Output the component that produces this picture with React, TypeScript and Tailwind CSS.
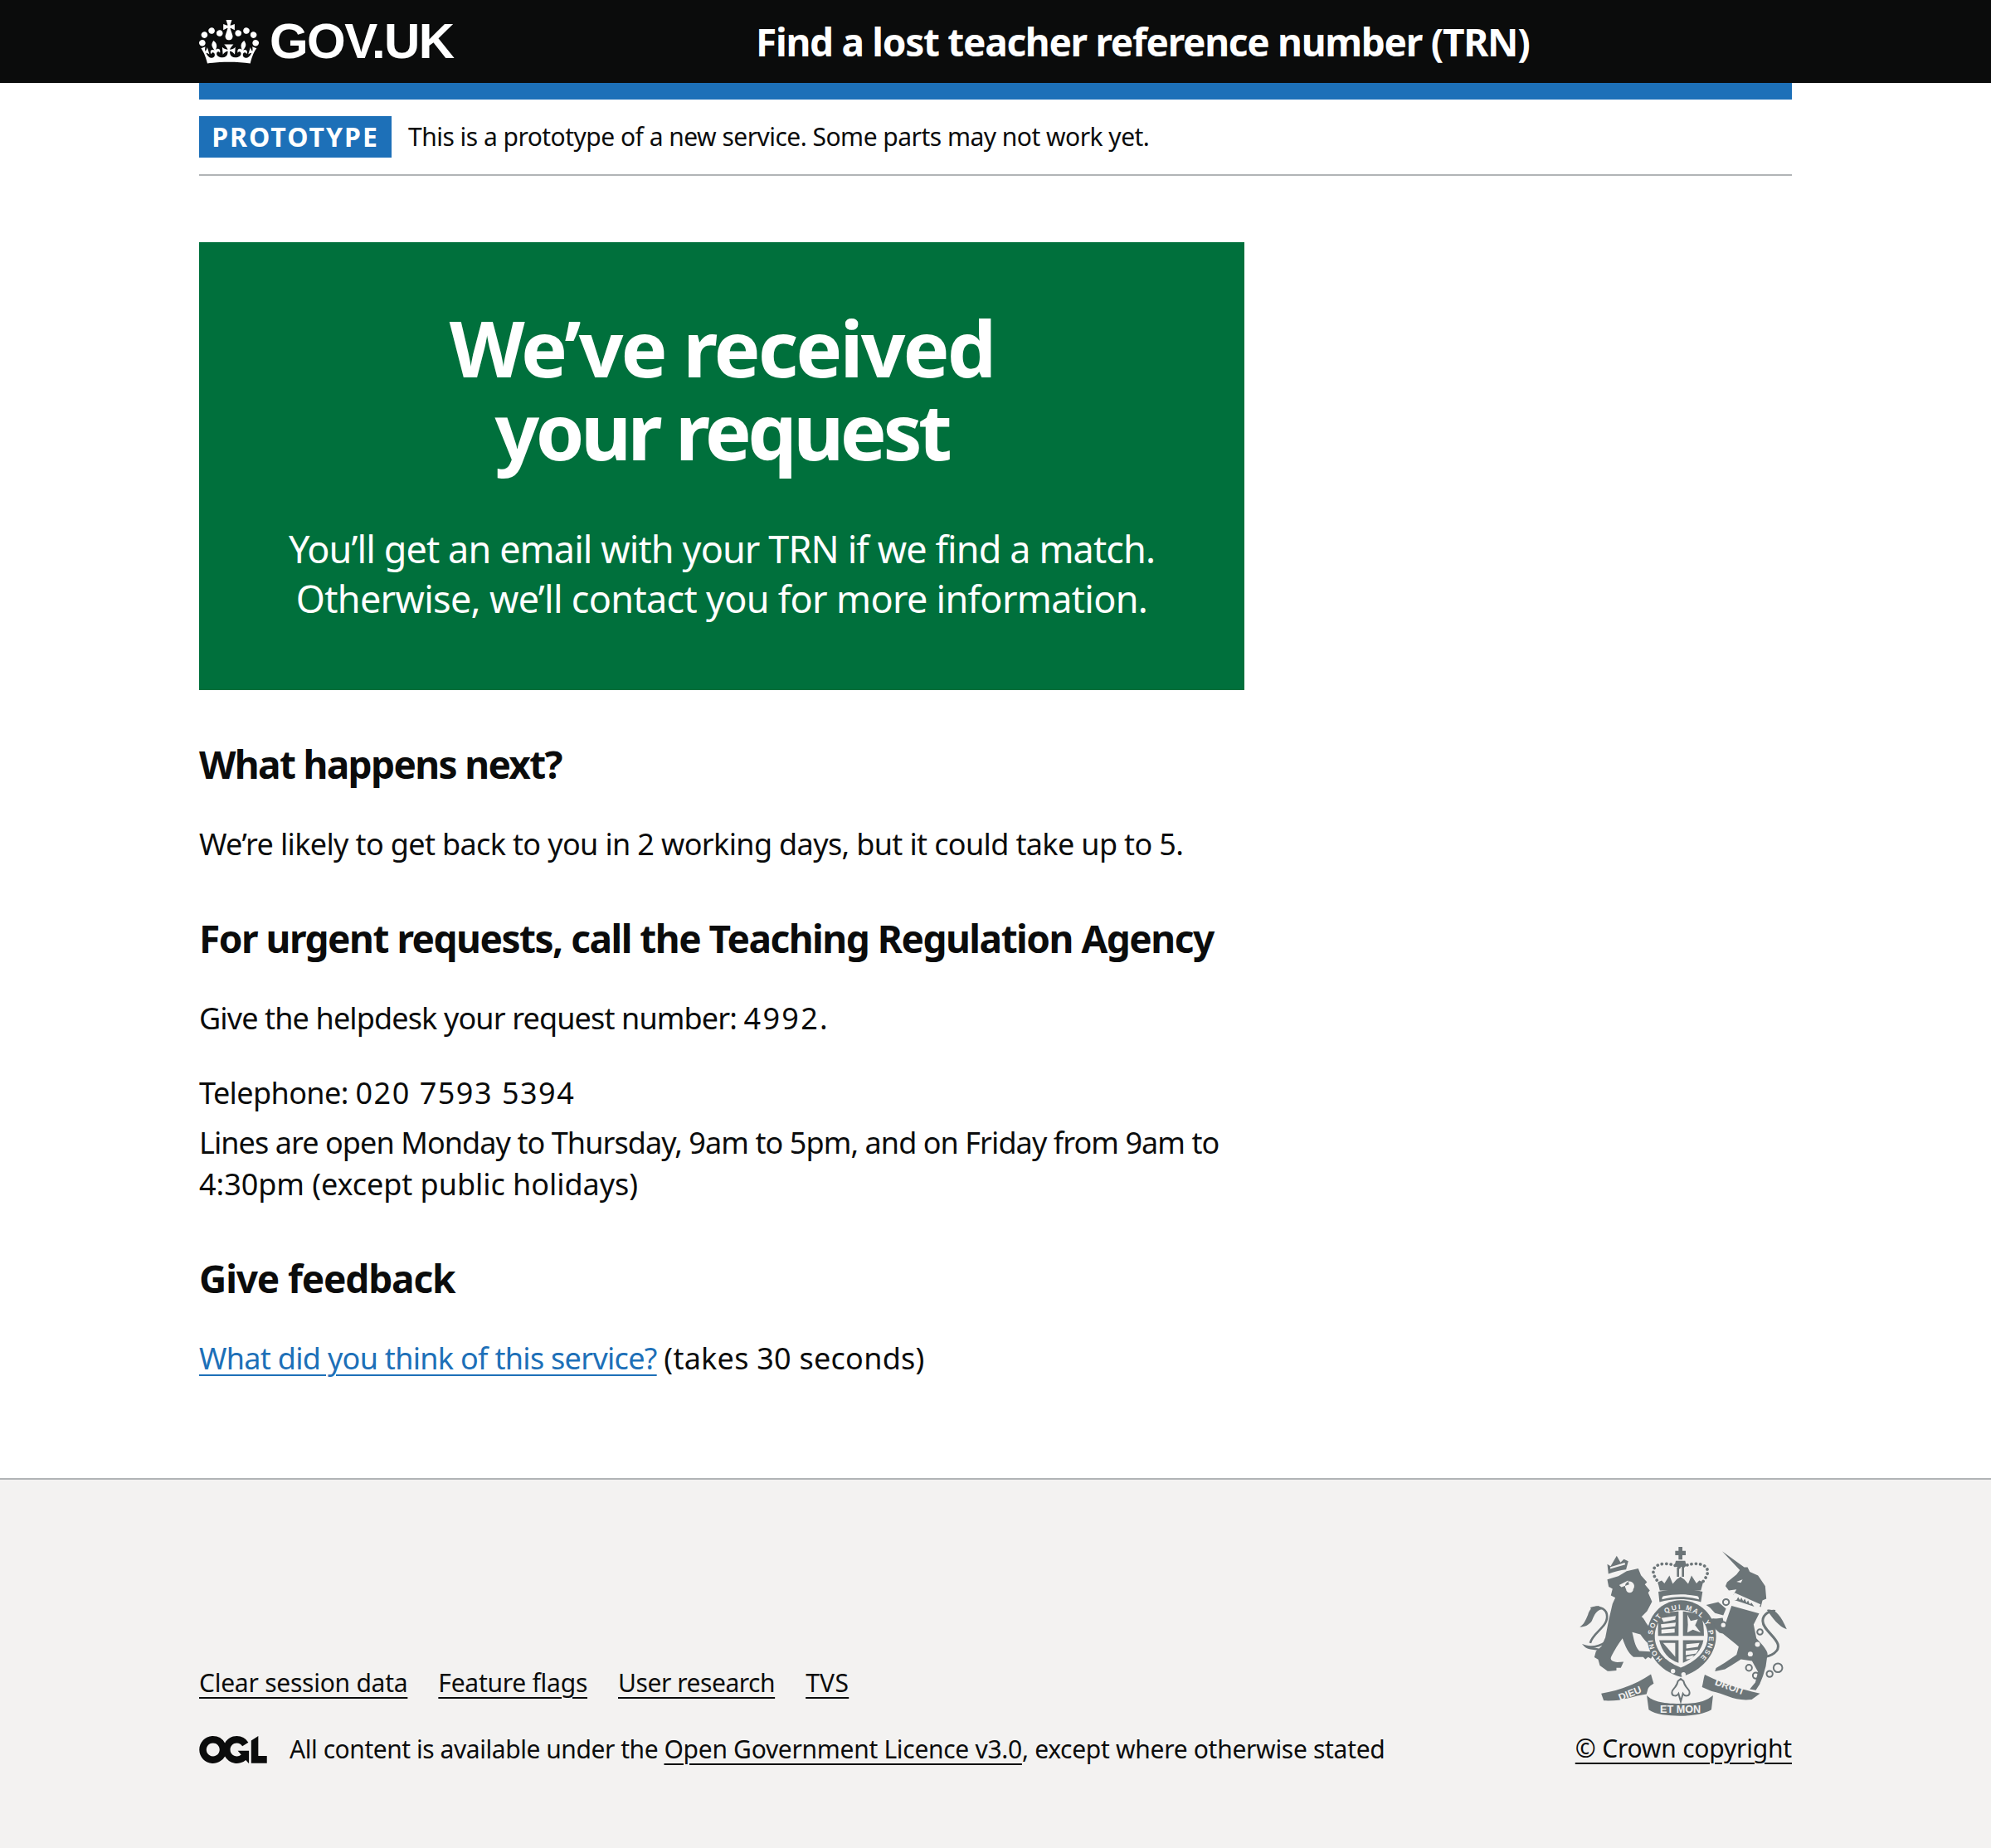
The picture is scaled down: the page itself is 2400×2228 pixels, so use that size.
const CROWN = "M25 30.2c3.5 1.5 7.7-.2 9.1-3.7 1.5-3.6-.2-7.8-3.9-9.2-3.6-1.4-7.6.3-9.1 3.9-1.4 3.5.3 7.5 3.9 9zM9 39.5c3.6 1.5 7.8-.2 9.2-3.7 1.5-3.6-.2-7.8-3.9-9.1-3.6-1.5-7.6.2-9.1 3.8-1.4 3.5.3 7.5 3.8 9zM4.4 57.2c3.5 1.5 7.7-.2 9.1-3.8 1.5-3.6-.2-7.7-3.9-9.1-3.5-1.5-7.6.3-9.1 3.8-1.4 3.5.3 7.6 3.9 9.1zm38.3-21.4c3.5 1.5 7.7-.2 9.1-3.8 1.5-3.6-.2-7.7-3.9-9.1-3.6-1.5-7.6.3-9.1 3.8-1.3 3.6.4 7.7 3.9 9.1zm64.4-5.6c-3.6 1.5-7.8-.2-9.1-3.7-1.5-3.6.2-7.8 3.8-9.2 3.6-1.4 7.7.3 9.2 3.9 1.3 3.5-.4 7.5-3.9 9zm15.9 9.3c-3.6 1.5-7.7-.2-9.1-3.7-1.5-3.6.2-7.8 3.7-9.1 3.6-1.5 7.7.2 9.2 3.8 1.5 3.5-.3 7.5-3.8 9zm4.7 17.7c-3.6 1.5-7.8-.2-9.2-3.8-1.5-3.6.2-7.7 3.9-9.1 3.6-1.5 7.7.3 9.2 3.8 1.3 3.5-.4 7.6-3.9 9.1zM89.3 35.8c-3.6 1.5-7.8-.2-9.2-3.8-1.4-3.6.2-7.7 3.9-9.1 3.6-1.5 7.7.3 9.2 3.8 1.4 3.6-.3 7.7-3.9 9.1zM69.7 17.7l8.9 4.7V9.3l-8.9 2.8c-.2-.3-.5-.6-.9-.9L72.4 0H59.6l3.6 11.2c-.3.3-.6.5-.9.9l-8.8-2.8v13.1l8.8-4.7c.3.3.6.7.9.9l-5 15.4v.1c-.2.8-.4 1.6-.4 2.4 0 4.1 3.1 7.5 7 8.1h.2c.3 0 .7.1 1 .1.4 0 .7 0 1-.1h.2c4-.6 7.1-4.1 7.1-8.1 0-.8-.1-1.7-.4-2.4V34l-5.1-15.4c.4-.2.7-.6 1-.9zM66 92.8c16.9 0 32.8 1.1 47.1 3.2 4-16.9 8.9-26.7 14-33.5l-9.6-3.4c1 4.9 1.1 7.2 0 10.2-1.5-1.4-3-4.3-4.2-8.7L108.6 76c2.8-2 5-3.2 7.5-3.3-4.4 9.4-10 11.9-13.6 11.2-4.3-.8-6.3-4.6-5.6-7.9 1-4.7 5.7-5.9 8-.5 4.3-8.7-3-11.4-7.6-8.8 7.1-7.2 7.9-13.5 2.1-21.1-8 6.1-8.1 12.3-4.5 20.8-4.7-5.4-12.1-2.5-9.5 6.2 3.4-5.2 7.9-2 7.2 3.1-.6 4.3-6.4 7.8-13.5 7.2-10.3-.9-10.9-8-11.2-13.8 2.5-.5 7.1 1.8 11 7.3L80.2 60c-4.1 4.4-8 5.3-12.3 5.4 1.4-4.4 8-11.6 8-11.6H55.5s6.4 7.2 7.9 11.6c-4.2-.1-8-1-12.3-5.4l1.4 16.4c3.9-5.5 8.5-7.7 10.9-7.3-.3 5.8-.9 12.8-11.1 13.8-7.2.6-12.9-2.9-13.5-7.2-.7-5 3.8-8.3 7.1-3.1 2.7-8.7-4.6-11.6-9.4-6.2 3.7-8.5 3.6-14.7-4.6-20.8-5.8 7.6-5 13.9 2.2 21.1-4.7-2.6-11.9.1-7.7 8.8 2.3-5.5 7.1-4.2 8.1.5.7 3.3-1.3 7.1-5.7 7.9-3.5.7-9-1.8-13.5-11.2 2.5.1 4.7 1.3 7.5 3.3l-4.7-15.4c-1.2 4.4-2.7 7.2-4.3 8.7-1.1-3-.9-5.3 0-10.2l-9.5 3.4c5 6.9 9.9 16.7 14 33.5 14.8-2.1 30.8-3.2 47.7-3.2z";
const OGL = "M421.5 142.8V.1l-50.7 32.3v161.1h112.4v-50.7zm-122.3-9.6A47.12 47.12 0 0 1 221 97.8c0-26 21.1-47.1 47.1-47.1 16.7 0 31.4 8.7 39.7 21.8l42.7-27.2A97.63 97.63 0 0 0 268.1 0c-36.5 0-68.3 20.1-85.1 49.7A98 98 0 0 0 97.8 0C43.9 0 0 43.9 0 97.8s43.9 97.8 97.8 97.8c36.5 0 68.3-20.1 85.1-49.7a97.76 97.76 0 0 0 149.6 25.4l19.4 22.2h3v-87.8h-80l24.3 27.5zM97.8 145c-26 0-47.1-21.1-47.1-47.1s21.1-47.1 47.1-47.1 47.2 21 47.2 47S123.8 145 97.8 145";

function Crest() {
  const c = "#6c7578";
  const bg = "#f3f2f1";
  const f = "'Liberation Sans', sans-serif";
  return (
    <svg viewBox="60 60 780 640" width="260" height="213" className="block" aria-hidden="true">
      {/* lion */}
      <path fill={c} d="M172 190l40-12 30-18 42-10 10 25 22 25-8 8 18 22-6 8 14 32-18 35-20 20c10 5 15 25 30 38 12 12 25 22 12 40l-18 18c-8-5-18-18-28-32l-30-8c6 20 8 50 26 68l42 2 10 8-10 18-10-6-10 8-8-8-35 0c-20-15-30-40-40-68-14 18-30 45-40 65-8 14 5 20 22 22l22-2-10 22-16 0 0 10-24 2-8 0-28-20-6-22-14-8 6-22 20-18 14-32 12-62 14-60 10-22-16-8 6-24-14-8z" />
      <path fill={bg} d="M215 210l32-16 4 14-28 10zM240 225a13 13 0 1 0 26 0 16 18 0 1 0-26 0z" />
      <path fill="none" stroke={c} strokeWidth="8" d="M182 400c-20 28-60 40-88 32 8 8 30 8 46 12M110 420c10-40 70-60 60-105-5-22-35-30-58-20" />
      <path fill={c} d="M72 362c16-8 22-26 30-44 4-20 20-34 40-32l10 12c-24 4-30 30-36 42-10 14-24 22-44 22z" />
      <path fill={c} d="M176 170l-4-36 12 8 8-14 14-24 14 24 12-12 16 8-8 30c-22 2-44 8-64 16z" />
      <path fill={bg} d="M183 152l54-16-2-7-52 16z" />
      {/* unicorn */}
      <path fill={c} d="M588 88L668 146L680 146L688 162L718 176L744 214L748 260L734 266L728 290L628 246L640 226L612 230L600 214L606 200L640 172L652 156Z" />
      <path fill={bg} d="M640 198l22-8-6 12z" />
      <path fill={c} d="M622 285l100 28-20 40 10 50c14 16 44 44 40 60l-6 42-10 34-12 30-14 22-22-4 20-24 10-38-22-40-40-6-34 22-24 14-36 8 4-12 30-18 44-30 8-30-12-10-42-34-16-22-20-2-18-14-6-16 22-4 20 4 24 14z" />
      <path fill={bg} d="M625 250l96 44 6-14-94-42z" />
      <path fill={c} d="M640 264l6-10 6 10 6-8 6 12 6-8 6 14 6-8 6 14 6-6 10 14-72-24z" />
      <path fill={c} d="M530 282l44-10 28 24-10 24-30-8-18-20zM540 335l50-6 12 60-24-6-30-28z" />
      <path fill="none" stroke={c} strokeWidth="9" d="M735 470c30 0 62-20 55-45-8-28-55-55-55-85 0-25 30-40 45-35" />
      <path fill={c} d="M750 300c30-6 50 20 72 70-30-10-50-40-72-70z" />
      <g fill={bg}><circle cx="690" cy="460" r="9" /><circle cx="716" cy="425" r="9" /></g>
      <g fill="none" stroke={c} strokeWidth="6">
        <circle cx="685" cy="510" r="11" /><circle cx="710" cy="538" r="11" /><circle cx="760" cy="532" r="11" /><circle cx="790" cy="510" r="16" />
        <circle cx="602" cy="272" r="11" fill={bg} /><circle cx="592" cy="355" r="11" fill={bg} /><circle cx="725" cy="380" r="10" fill={bg} />
      </g>
      {/* royal crown */}
      <path fill={c} d="M430 72h14v14h12v16h-12v16h-14v-16h-12V86h12zM420 122h34l4 16-4 6h-34l-4-6zM424 146h8v34h-8zM442 146h8v34h-8z" />
      <path fill="none" stroke={c} strokeWidth="11" strokeLinecap="round" strokeDasharray="0.5 15.5" d="M362 205c-38-40-28-70 18-72 22 0 40 6 57 15 17-9 35-15 57-15 46 2 56 32 18 72" />
      <path fill={c} d="M355 200l14-6 10 10 18-28 12 30 14-16 14-10 14 10 14 16 12-30 18 28 10-10 14 6-8 30H362z" />
      <path fill={c} d="M357 234c55-12 105-12 160 0l-6 38c-45-14-105-14-150 0z" />
      <path fill={bg} d="M370 262c0-8 2-10 6-12 40-8 84-8 122 0 4 2 6 4 6 12-44-12-90-12-134 0z" />
      {/* garter and shield */}
      <path fill={c} d="M316 395c0-72 52-130 122-130s128 58 128 130c0 60-45 125-128 148-83-23-122-88-122-148z" />
      <path fill={bg} d="M344 395c0-52 40-94 94-94s98 42 98 94c0 48-36 90-98 114-62-24-94-66-94-114z" />
      <g fill={c}>
        <path d="M360 318c18-7 44-11 70-12v88h-74c-1-30 0-56 4-76z" />
        <path d="M446 306c25 2 47 6 66 16 8 20 10 46 10 72h-76z" />
        <path d="M360 410h70v82c-34-10-60-40-70-82z" />
        <path d="M446 410h74c-6 38-36 66-74 82z" />
      </g>
      <g fill={bg}>
        <path d="M368 330l52-8-2 14-42 8zM366 352l54-6-2 14-50 6zM368 372l48-4 0 14-48 4z" />
        <path d="M462 318l12 22 26-6-10 22 20 26-28-10-20 10 2-28z" />
        <path d="M374 420h44v50zM386 420v36M398 420v46" />
        <path d="M458 424l48-4-6 14-42 6zM456 448l46-4-8 14-38 6zM458 470l28-6-8 12-20 4z" />
      </g>
      <defs><path id="garter-arc" d="M372 478A102 102 0 1 1 504 478" /></defs>
      <text fill={bg} fontSize="25" fontWeight="700" fontFamily={f}>
        <textPath href="#garter-arc" startOffset="0" textLength="490">HONI SOIT QUI MAL Y PENSE</textPath>
      </text>
      <g fill={bg}><circle cx="410" cy="522" r="8" /><circle cx="448" cy="534" r="8" /></g>
      {/* motto ribbon */}
      <path fill={c} d="M150 603c60-10 120-30 180-70l10 34c-10 6-20 12-22 24l-4 14c-50 6-90 28-155 24z" />
      <path fill={c} d="M315 610c20 20 50 30 120 30s95-10 120-30l-6 52c-30 18-75 22-115 22s-88-4-112-22z" />
      <path fill={c} d="M525 535c60 30 120 50 200 68l-30 22c-60 8-95-20-145-30l-35-15c5-18 5-30 10-45z" />
      <path fill="none" stroke={c} strokeWidth="6" d="M406 600c0-16 16-14 22-42l10-8 10 8c6 28 22 26 22 42 0 14-18 14-24 4l-8 28-8-28c-6 10-24 10-24-4z" />
      <text x="255" y="615" textAnchor="middle" fill={bg} fontSize="36" fontWeight="700" fontFamily={f} transform="rotate(-22 255 605)">DIEU</text>
      <text x="437" y="674" textAnchor="middle" fill={bg} fontSize="38" fontWeight="700" fontFamily={f}>ET MON</text>
      <text x="612" y="590" textAnchor="middle" fill={bg} fontSize="36" fontWeight="700" fontFamily={f} transform="rotate(20 612 590)">DROIT</text>
    </svg>
  );
}

export default function App() {
  return (
    <div className="font-['Noto_Sans',sans-serif] text-[#0b0c0c] bg-white min-h-[2228px] flex flex-col">
      <header className="bg-[#0b0c0c] h-[100px] shrink-0">
        <div className="w-[1920px] mx-auto flex items-center h-full">
          <div className="w-[671px] flex items-center gap-[13px] text-white">
            <svg viewBox="0 0 132 97" width="72" height="53" fill="currentColor" className="shrink-0" aria-hidden="true"><path fillRule="evenodd" d={CROWN} /></svg>
            <span className="text-[60px] leading-[100px] font-bold tracking-[-1.6px] font-['Liberation_Sans',sans-serif]">GOV.UK</span>
          </div>
          <div className="text-white text-[46px] leading-[96px] font-bold tracking-[-1.3px] whitespace-nowrap">Find a lost teacher reference number (TRN)</div>
        </div>
      </header>
      <div className="w-[1920px] mx-auto grow">
        <div className="h-5 bg-[#1d70b8]" />
        <div className="pt-5 pb-5 border-b-2 border-[#b1b4b6] flex items-center">
          <span className="bg-[#1d70b8] text-white h-[50px] w-[232px] flex items-center justify-center text-[32px] leading-[50px] font-bold tracking-[2px]">PROTOTYPE</span>
          <span className="ml-5 text-[30px] leading-[50px] tracking-[-0.52px]">This is a prototype of a new service. Some parts may not work yet.</span>
        </div>
        <main className="w-[1260px] pt-20">
          <div className="bg-[#00703c] text-white text-center h-[540px] pt-[77px]">
            <h1 className="text-[94px] leading-[100px] font-bold">
              <span className="block tracking-[-2.9px]">We’ve received</span>
              <span className="block tracking-[-4.5px]">your request</span>
            </h1>
            <p className="mt-[63px] text-[45px] leading-[60px]">
              <span className="block tracking-[-0.9px]">You’ll get an email with your TRN if we find a match.</span>
              <span className="block tracking-[-0.7px]">Otherwise, we’ll contact you for more information.</span>
            </p>
          </div>
          <h2 className="mt-[59px] text-[46px] leading-[60px] font-bold tracking-[-1.67px]">What happens next?</h2>
          <p className="mt-[42px] text-[36px] leading-[50px] tracking-[-0.64px] whitespace-nowrap">We’re likely to get back to you in 2 working days, but it could take up to 5.</p>
          <h2 className="mt-[58px] text-[46px] leading-[60px] font-bold tracking-[-1.5px] whitespace-nowrap">For urgent requests, call the Teaching Regulation Agency</h2>
          <p className="mt-[42px] text-[36px] leading-[50px] tracking-[-0.87px]">Give the helpdesk your request number: <span className="tracking-[2.3px]">4992.</span></p>
          <p className="mt-10 text-[36px] leading-[50px] tracking-[-0.6px]">Telephone: <span className="tracking-[1.5px]">020 7593 5394</span></p>
          <p className="mt-2.5 text-[36px] leading-[50px] whitespace-nowrap">
            <span className="block tracking-[-0.93px]">Lines are open Monday to Thursday, 9am to 5pm, and on Friday from 9am to</span>
            <span className="block tracking-[-0.05px]">4:30pm (except public holidays)</span>
          </p>
          <h2 className="mt-[58px] text-[46px] leading-[60px] font-bold tracking-[-1.15px]">Give feedback</h2>
          <p className="mt-[42px] text-[36px] leading-[50px] tracking-[-0.7px]"><a href="#" className="text-[#1d70b8] underline decoration-2 underline-offset-[6px]">What did you think of this service?</a> <span className="tracking-[0.25px]">(takes 30 seconds)</span></p>
        </main>
      </div>
      <footer className="bg-[#f3f2f1] border-t-2 border-[#b1b4b6] h-[446px] shrink-0">
        <div className="w-[1920px] mx-auto flex justify-between pt-20">
          <div className="pt-[145px]">
            <ul className="flex gap-[37px] text-[30px] leading-[40px] tracking-[-0.25px]">
              <li><a href="#" className="underline decoration-2 underline-offset-[6px]">Clear session data</a></li>
              <li><a href="#" className="underline decoration-2 underline-offset-[6px]">Feature flags</a></li>
              <li><a href="#" className="underline decoration-2 underline-offset-[6px] tracking-[-0.45px]">User research</a></li>
              <li><a href="#" className="underline decoration-2 underline-offset-[6px] tracking-[0.3px]">TVS</a></li>
            </ul>
            <div className="mt-10 flex items-center text-[30px] leading-[40px] tracking-[-0.3px]">
              <svg viewBox="0 0 483.2 195.7" width="82" height="33" fill="currentColor" className="shrink-0 mr-[27px]" aria-hidden="true"><path d={OGL} /></svg>
              <span><span className="tracking-[-0.45px]">All content is available under the </span><a href="#" className="underline decoration-2 underline-offset-[6px]">Open Government Licence v3.0</a>, except where otherwise stated</span>
            </div>
          </div>
          <div className="flex flex-col items-end -mt-[3px]">
            <Crest />
            <a href="#" className="mt-[14px] text-[30px] leading-[40px] tracking-[-0.2px] underline decoration-2 underline-offset-[6px]">© Crown copyright</a>
          </div>
        </div>
      </footer>
    </div>
  );
}
